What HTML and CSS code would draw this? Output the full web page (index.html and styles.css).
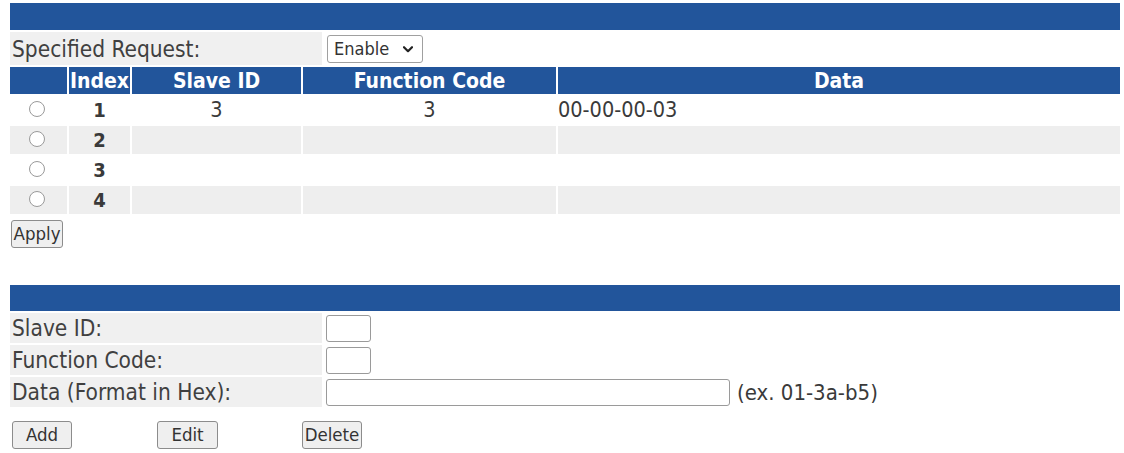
FILE: index.html
```html
<!DOCTYPE html>
<html>
<head>
<meta charset="utf-8">
<link rel="stylesheet" href="styles.css">
</head>
<body>
<div class="page">
  <div class="bar"></div>
  <div class="form-grid spec">
    <div class="label">Specified Request:</div>
    <div class="field">
      <span class="select-wrap">
        <select class="select"><option>Enable</option><option>Disable</option></select>
        <svg class="chev" width="10" height="7" viewBox="0 0 10 7"><path d="M1 1.2 L5 5.2 L9 1.2" fill="none" stroke="#222" stroke-width="2.2" stroke-linecap="round" stroke-linejoin="round"/></svg>
      </span>
    </div>
  </div>
  <table class="grid">
    <thead>
      <tr>
        <th class="c-radio"></th>
        <th class="c-index">Index</th>
        <th class="c-slave">Slave ID</th>
        <th class="c-func">Function Code</th>
        <th>Data</th>
      </tr>
    </thead>
    <tbody>
      <tr>
        <td class="center"><input type="radio" name="sel" class="radio"></td>
        <td class="center idx">1</td>
        <td class="center">3</td>
        <td class="center">3</td>
        <td>00-00-00-03</td>
      </tr>
      <tr class="alt">
        <td class="center"><input type="radio" name="sel" class="radio"></td>
        <td class="center idx">2</td>
        <td></td><td></td><td></td>
      </tr>
      <tr>
        <td class="center"><input type="radio" name="sel" class="radio"></td>
        <td class="center idx">3</td>
        <td></td><td></td><td></td>
      </tr>
      <tr class="alt">
        <td class="center"><input type="radio" name="sel" class="radio"></td>
        <td class="center idx">4</td>
        <td></td><td></td><td></td>
      </tr>
    </tbody>
  </table>
  <button class="btn apply">Apply</button>

  <div class="bar bar2"></div>
  <div class="form-grid entry">
    <div class="label">Slave ID:</div>
    <div class="field"><input type="text" class="input small"></div>
    <div class="label">Function Code:</div>
    <div class="field"><input type="text" class="input small"></div>
    <div class="label">Data (Format in Hex):</div>
    <div class="field"><input type="text" class="input wide"><span class="hint">(ex. 01-3a-b5)</span></div>
  </div>
  <div class="actions">
    <button class="btn b-add">Add</button>
    <button class="btn b-edit">Edit</button>
    <button class="btn b-del">Delete</button>
  </div>
</div>
</body>
</html>
```
FILE: styles.css
```css
html, body {
  margin: 0;
  padding: 0;
  background: #ffffff;
}
body {
  font-family: "DejaVu Sans Condensed", "DejaVu Sans", sans-serif;
  font-size: 21px;
  color: #3a3a3a;
}
.page {
  padding: 3px 4px 0 10px;
}
.bar {
  height: 27px;
  background: #22559b;
}
.bar2 {
  margin-top: 37px;
  height: 26px;
}
.form-grid {
  display: grid;
  grid-template-columns: 312px 1fr;
  column-gap: 2px;
  row-gap: 2px;
}
.spec {
  margin-top: 2px;
  height: 33px;
}
.entry {
  margin-top: 2px;
}
.label {
  background: #f0f0f0;
  padding-left: 2px;
  display: flex;
  align-items: center;
  height: 100%;
  min-height: 30px;
  line-height: 26px;
  font-size: 22.5px;
  color: #404040;
}
.field {
  display: flex;
  align-items: center;
  padding-left: 2px;
  min-height: 30px;
}
.spec .field {
  padding-left: 3px;
}
.select-wrap {
  position: relative;
  display: inline-block;
  height: 28px;
}
.select {
  -webkit-appearance: none;
  appearance: none;
  width: 96px;
  height: 28px;
  font-family: "DejaVu Sans Condensed", "DejaVu Sans", sans-serif;
  font-size: 18px;
  color: #333;
  padding: 0 0 0 6px;
  border: 1px solid #a0a0a0;
  border-radius: 3px;
  background: #fff;
  margin: 0;
}
.chev {
  position: absolute;
  left: 76px;
  top: 11px;
  pointer-events: none;
}
.grid {
  border-collapse: separate;
  border-spacing: 2px;
  table-layout: fixed;
  width: calc(100% + 4px);
  margin: 0 -2px;
  font-size: 21.5px;
}
.grid th {
  background: #22559b;
  color: #ffffff;
  font-weight: bold;
  font-size: 21px;
  height: 27px;
  padding: 0;
  text-align: center;
  line-height: 26px;
}
.c-radio { width: 57px; }
.c-index { width: 61px; }
.c-slave { width: 169px; }
.c-func { width: 253px; }
.grid td {
  height: 28px;
  padding: 0;
  line-height: 26px;
  vertical-align: middle;
}
.grid tr.alt td {
  background: #eeeeee;
}
.center {
  text-align: center;
}
.idx {
  font-weight: bold;
  color: #3a3a3a;
  font-size: 20px;
}
.radio {
  -webkit-appearance: none;
  appearance: none;
  width: 16px;
  height: 16px;
  margin: 0 3px 0 0;
  border: 1px solid #9a9a9a;
  border-radius: 50%;
  background: #fff;
  vertical-align: middle;
  position: relative;
  top: -2px;
}
.btn {
  font-family: "DejaVu Sans Condensed", "DejaVu Sans", sans-serif;
  font-size: 18.5px;
  color: #333;
  background: #efefef;
  border: 1px solid #8c8c8c;
  border-radius: 3px;
  height: 28px;
  padding: 0 1px;
  margin: 0;
  line-height: 24px;
}
.apply {
  display: block;
  margin-top: 4px;
  margin-left: 1px;
  width: 52px;
}
.input {
  height: 27px;
  box-sizing: border-box;
  border: 1px solid #9a9a9a;
  border-radius: 3px;
  background: #fff;
  margin: 0;
  padding: 0 4px;
  font-family: "DejaVu Sans Condensed", "DejaVu Sans", sans-serif;
  font-size: 18px;
}
.small {
  width: 45px;
}
.wide {
  width: 404px;
}
.hint {
  margin-left: 7px;
  font-size: 22px;
}
.actions {
  display: flex;
  margin-top: 14px;
  margin-left: 2px;
  gap: 85px;
}
.b-add { width: 60px; }
.b-edit { width: 61px; }
.b-del { width: 60px; margin-left: -1px; }
```
